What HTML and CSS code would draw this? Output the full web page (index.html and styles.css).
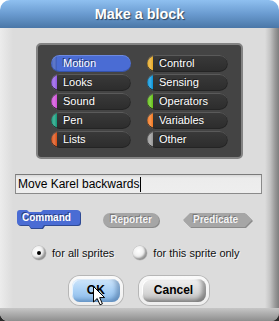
FILE: index.html
```html
<!DOCTYPE html>
<html>
<head>
<meta charset="utf-8">
<link rel="stylesheet" href="styles.css">
</head>
<body>
<div class="dialog">
  <div class="titlebar">Make a block</div>
  <div class="content">
    <div class="palette">
      <div class="cat c-motion sel">Motion</div>
      <div class="cat c-control">Control</div>
      <div class="cat c-looks">Looks</div>
      <div class="cat c-sensing">Sensing</div>
      <div class="cat c-sound">Sound</div>
      <div class="cat c-operators">Operators</div>
      <div class="cat c-pen">Pen</div>
      <div class="cat c-variables">Variables</div>
      <div class="cat c-lists">Lists</div>
      <div class="cat c-other">Other</div>
    </div>
    <div class="field"><span class="field-text">Move Karel backwards</span><span class="caret"></span></div>
    <div class="types">
      <div class="shape command">
        <svg class="shape-bg" width="64" height="19" viewBox="0 0 64 19">
          <path d="M1,4 Q1,1 4,1 L10,1 L12,3 L24,3 L26,1 L61,1 Q64,1 64,4 L64,13 Q64,16 61,16 L28,16 L26,19 L14,19 L12,16 L4,16 Q1,16 1,13 Z" fill="#2f4a94"/>
          <path d="M0,3 Q0,0 3,0 L10,0 L12,2 L24,2 L26,0 L60,0 Q63,0 63,3 L63,12 Q63,15 60,15 L27,15 L25,18 L14,18 L12,15 L3,15 Q0,15 0,12 Z" fill="#4a6cd4"/>
        </svg>
        <span class="shape-label">Command</span>
      </div>
      <div class="shape reporter">
        <span class="shape-label">Reporter</span>
      </div>
      <div class="shape predicate">
        <svg class="shape-bg" width="70" height="15" viewBox="0 0 70 15">
          <polygon points="1,8 8,1 63,1 70,8 63,15 8,15" fill="#8a8a8a"/>
          <polygon points="0,7 7,0 62,0 69,7 62,14 7,14" fill="#a6a6a6"/>
        </svg>
        <span class="shape-label">Predicate</span>
      </div>
    </div>
    <div class="scope">
      <div class="radio on"></div><span class="radio-label">for all sprites</span>
      <div class="radio"></div><span class="radio-label">for this sprite only</span>
    </div>
    <div class="actions">
      <div class="btn btn-ok"><div class="btn-face">OK</div></div>
      <div class="btn"><div class="btn-face">Cancel</div></div>
    </div>
  </div>
  <svg class="cursor" width="13" height="20" viewBox="0 0 13 20">
    <path d="M0.5,0.5 L0.5,16 L4.2,12.5 L7,18.8 L9.4,17.8 L6.7,11.6 L11.6,11.6 Z" fill="#fff" stroke="#000" stroke-width="1"/>
  </svg>
</div>
</body>
</html>
```

FILE: styles.css
```css
* {
  box-sizing: border-box;
  margin: 0;
  padding: 0;
}

html, body {
  width: 279px;
  height: 321px;
  overflow: hidden;
}

body {
  background: linear-gradient(#ffffff 0 50%, #2a2a2a 50%);
  font-family: "Liberation Sans", Arial, sans-serif;
}

.dialog {
  position: relative;
  width: 279px;
  height: 321px;
  border-radius: 10px 10px 8px 8px;
  overflow: hidden;
  display: flex;
  flex-direction: column;
}

.titlebar {
  height: 28px;
  flex: none;
  background: linear-gradient(#8fc0f0, #6a9bd0 50%, #4a77a7);
  color: #ffffff;
  font-weight: bold;
  font-size: 14.4px;
  line-height: 28px;
  text-align: center;
  text-shadow: 1px 1px 1px rgba(0, 0, 0, 0.55);
}

.content {
  flex: 1;
  display: flex;
  flex-direction: column;
  padding-top: 15px;
  background:
    linear-gradient(to bottom, transparent 0, transparent calc(100% - 13px), #c6c6c6 calc(100% - 13px), #8e8e8e 100%),
    linear-gradient(to right, #ececec 0, #e2e2e2 8px, #dcdcdc 13px, #dcdcdc 265px, #c4c4c4 270px, #9a9a9a 275px, #7e7e7e 279px);
}

/* category palette */
.palette {
  margin-left: 36px;
  width: 207px;
  height: 116px;
  border: 2px solid #838383;
  border-radius: 5px;
  background: #444444;
  display: grid;
  grid-template-columns: 80px 81px;
  grid-auto-rows: 17px;
  column-gap: 16px;
  row-gap: 2px;
  padding: 10px 0 0 13px;
}

.cat {
  --c: #4a6cd4;
  border-radius: 9px;
  background:
    linear-gradient(to right, transparent 0, rgba(255, 255, 255, 0.25) 3px, transparent 6px) 0 0 / 6px 100% no-repeat,
    linear-gradient(to right, var(--c) 0 6px, transparent 6px),
    linear-gradient(#3a3a3a, #2c2c2c);
  box-shadow: inset 0 1px 0 #5a5a5a, inset 0 -1px 0 #242424, inset -1px 0 0 #262626;
  color: #ffffff;
  font-size: 11px;
  line-height: 17px;
  padding-left: 12px;
  text-shadow: -1px -1px 0 rgba(0, 0, 0, 0.55);
  white-space: nowrap;
}

.cat.sel {
  background:
    linear-gradient(to right, transparent 0, rgba(255, 255, 255, 0.2) 3px, transparent 6px) 0 0 / 6px 100% no-repeat,
    linear-gradient(to right, #3d5cbc 0 6px, transparent 6px),
    #4a6cd4;
  box-shadow: inset 0 1px 0 #6d8ae0, inset 0 -1px 0 #3452ac;
}

.c-motion { --c: #4a6cd4; }
.c-looks { --c: #8f56e3; }
.c-sound { --c: #cf4ad9; }
.c-pen { --c: #0e9a78; }
.c-lists { --c: #d94d11; }
.c-control { --c: #e6a822; }
.c-sensing { --c: #0494dc; }
.c-operators { --c: #62c213; }
.c-variables { --c: #f3761d; }
.c-other { --c: #969696; }

/* text field */
.field {
  margin: 15px 0 0 15px;
  width: 247px;
  height: 20px;
  border: 1px solid #8a8a8a;
  border-top-color: #7a7a7a;
  background: linear-gradient(#d8d8d8 0, #ececec 3px, #eeeeee 100%);
  display: flex;
  align-items: center;
  padding-left: 2px;
  font-size: 12px;
  color: #000000;
}

.caret {
  width: 1px;
  height: 15px;
  background: #000000;
  margin-left: 1px;
}

/* block type row */
.types {
  margin-top: 16px;
  padding-left: 17px;
  height: 18px;
  display: flex;
  align-items: flex-start;
}

.shape {
  display: grid;
  font-size: 10px;
  font-weight: bold;
  color: #ffffff;
}

.shape-bg,
.shape-label {
  grid-area: 1 / 1;
}

.command {
  width: 64px;
  height: 19px;
}

.command .shape-label {
  padding-left: 5px;
  line-height: 15px;
  text-shadow: -1px -1px 0 rgba(0, 0, 0, 0.45);
}

.reporter {
  margin: 3px 0 0 22px;
  width: 56px;
  height: 14px;
  border-radius: 7px;
  background: #a6a6a6;
  box-shadow: 1px 1px 0 #8a8a8a;
  text-align: center;
  line-height: 14px;
  color: #f4f4f4;
  text-shadow: -1px -1px 0 rgba(0, 0, 0, 0.3);
}

.predicate {
  margin: 3px 0 0 24px;
  width: 70px;
  height: 15px;
}

.predicate .shape-label {
  padding-left: 10px;
  line-height: 14px;
  color: #f4f4f4;
  text-shadow: -1px -1px 0 rgba(0, 0, 0, 0.3);
}

/* scope row */
.scope {
  margin-top: 18px;
  padding-left: 32px;
  height: 14px;
  display: flex;
  align-items: center;
  font-size: 11px;
  color: #111111;
}

.radio {
  width: 14px;
  height: 14px;
  border-radius: 50%;
  background: radial-gradient(circle at 40% 35%, #ffffff 0, #f0f0f0 40%, #d0d0d0 100%);
  box-shadow: inset -2px -2px 2px rgba(0, 0, 0, 0.35), 0 0 0 0.5px #bdbdbd;
  display: grid;
  place-items: center;
}

.radio.on::after {
  content: "";
  width: 4px;
  height: 4px;
  border-radius: 50%;
  background: #000000;
}

.radio-label {
  margin-left: 6px;
  margin-right: 19px;
  text-shadow: 1px 1px 0 rgba(255, 255, 255, 0.7);
}

/* buttons */
.actions {
  margin-top: 16px;
  display: flex;
  justify-content: center;
  gap: 16px;
  padding-right: 1px;
}

.btn {
  height: 29px;
  min-width: 48px;
  border-radius: 11px;
  padding: 3px;
  background: linear-gradient(#fafafa, #eeeeee);
  box-shadow: 0 0 0 1px #b6b6b6;
}

.btn-face {
  height: 100%;
  border-radius: 8px;
  padding: 0 13px 0 12px;
  font-size: 12px;
  font-weight: bold;
  color: #000000;
  line-height: 23px;
  text-align: center;
  background: linear-gradient(#f2f2f2, #d6d6d6 60%, #b8b8b8);
  box-shadow: inset -4px -2px 4px rgba(0, 0, 0, 0.35), inset 1px 1px 0 #ffffff;
}

.btn-ok .btn-face {
  padding: 0 15px;
  background: linear-gradient(#cfe6fb, #a9d0f5 50%, #88b8e8);
  box-shadow: inset -4px -2px 4px rgba(20, 60, 110, 0.35), inset 1px 1px 0 #e6f3ff;
}

.cursor {
  position: absolute;
  left: 93px;
  top: 286px;
}
```
